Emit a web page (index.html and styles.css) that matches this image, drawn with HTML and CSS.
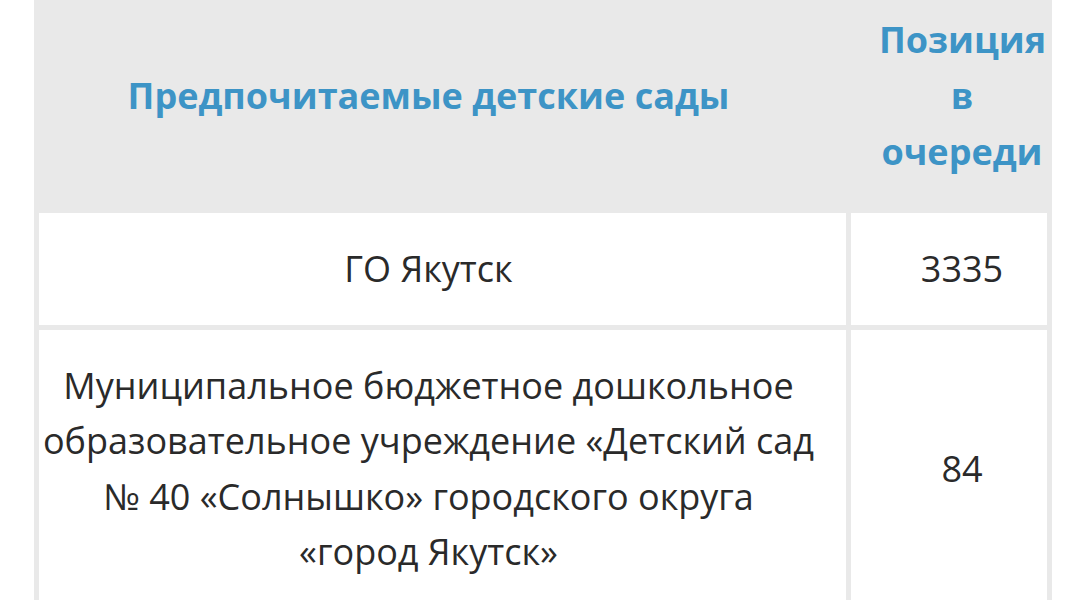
FILE: index.html
```html
<!DOCTYPE html>
<html lang="ru">
<head>
<meta charset="utf-8">
<link rel="stylesheet" href="styles.css">
</head>
<body>
<table class="queue">
  <colgroup>
    <col class="col-name">
    <col class="col-pos">
  </colgroup>
  <thead>
    <tr>
      <th class="cell-name">Предпочитаемые детские сады</th>
      <th class="cell-pos">Позиция в очереди</th>
    </tr>
  </thead>
  <tbody>
    <tr>
      <td class="cell-name">ГО Якутск</td>
      <td class="cell-pos">3335</td>
    </tr>
    <tr>
      <td class="cell-name">Муниципальное бюджетное дошкольное образовательное учреждение «Детский сад №&nbsp;40 «Солнышко» городского округа «город&nbsp;Якутск»</td>
      <td class="cell-pos">84</td>
    </tr>
  </tbody>
</table>
</body>
</html>
```
FILE: styles.css
```css
html, body {
  margin: 0;
  padding: 0;
  background: #ffffff;
  font-family: "Open Sans", "Liberation Sans", sans-serif;
}

.queue {
  margin: -21px 0 0 34px;
  width: 1018px;
  table-layout: fixed;
  border-collapse: separate;
  border-spacing: 5px;
  background: #e9e9e9;
}

.col-name { width: 807px; }
.col-pos { width: 196px; }

.queue th,
.queue td {
  padding-top: 28px;
  padding-bottom: 28px;
  text-align: center;
  vertical-align: middle;
  font-size: 36px;
  line-height: 56px;
}

.queue td {
  line-height: 55.6px;
}

.cell-name {
  padding-left: 2px;
  padding-right: 30px;
}

.cell-pos {
  padding-left: 28px;
  padding-right: 2px;
}

.queue th {
  background: #e9e9e9;
  color: #3d94c6;
  font-weight: 700;
}

.queue td {
  background: #ffffff;
  color: #2a2a2a;
  font-weight: 400;
}
```
